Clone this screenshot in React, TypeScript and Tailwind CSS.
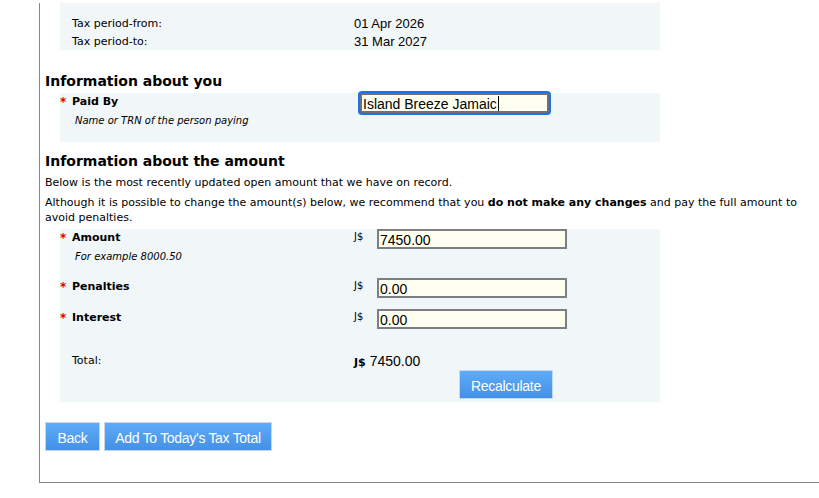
import React from 'react'

const verdana = "font-['DejaVu_Sans',Verdana,sans-serif]"
const helv = "font-['Liberation_Sans',Helvetica,Arial,sans-serif]"

function Req() {
  return <span className="w-3 shrink-0 text-[12px] font-bold text-[#e00000] leading-[14px]">*</span>
}

function MoneyInput({ value }: { value: string }) {
  return (
    <div className="flex items-start">
      <span className={`${verdana} w-[23px] text-[10px] leading-[16px] text-black`}>J$</span>
      <input
        readOnly
        value={value}
        className={`${helv} h-5 w-[190px] border-2 border-[#7d7d85] bg-[#fffff0] px-px pt-px text-[14px] leading-none text-black outline-none`}
      />
    </div>
  )
}

function Button({ label, className = '' }: { label: string; className?: string }) {
  return (
    <button
      className={`${helv} h-[29px] border border-[#c6d8ec] bg-gradient-to-b from-[#5eacf8] to-[#4490e6] pt-[3px] text-[14px] font-light leading-none tracking-[-0.3px] text-white ${className}`}
    >
      {label}
    </button>
  )
}

export default function App() {
  return (
    <div className="h-[498px] overflow-hidden bg-white">
      <div className={`${verdana} ml-[39px] border-b border-l border-[#888888] pb-[31px] pl-[5px] text-[11px] text-black`}>
        {/* tax period */}
        <div className="ml-[15px] mt-[3px] h-[47px] w-[600px] bg-[#f1f6f9] pt-[12px]">
          <div className="flex h-[18px] items-center pl-3">
            <span className="w-[282px]">Tax period-from:</span>
            <span className={`${helv} text-[13px]`}>01 Apr 2026</span>
          </div>
          <div className="flex h-[18px] items-center pl-3">
            <span className="w-[282px]">Tax period-to:</span>
            <span className={`${helv} text-[13px]`}>31 Mar 2027</span>
          </div>
        </div>

        {/* payer */}
        <h2 className="mt-[22px] h-[21px] text-[14px] font-bold leading-[18px]">Information about you</h2>
        <div className="ml-[15px] h-[49px] w-[600px] bg-[#f1f6f9]">
          <div className="flex">
            <div className="flex w-[300px] items-start pt-[2px]">
              <Req />
              <span className="text-[11px] font-bold leading-[14px]">Paid By</span>
            </div>
            <div
              className={`${helv} flex h-5 w-[189px] items-center rounded-[2px] border-2 border-[#6f6f77] bg-[#fffff0] px-px pt-px text-[14px] leading-none text-black ring-2 ring-[#1b72ec]`}
            >
              <span>Island Breeze Jamaic</span>
              <span className="ml-px h-[15px] w-px bg-black" />
            </div>
          </div>
          <p className="ml-[15px] mt-[1px] text-[10px] italic leading-[14px]">Name or TRN of the person paying</p>
        </div>

        {/* amount */}
        <h2 className="mt-[10px] h-[18px] text-[14px] font-bold leading-[18px]">Information about the amount</h2>
        <p className="mt-[5px] leading-[15px]">Below is the most recently updated open amount that we have on record.</p>
        <p className="mt-[5px] pr-4 leading-[15px]">
          Although it is possible to change the amount(s) below, we recommend that you{' '}
          <b>do not make any changes</b> and pay the full amount to avoid penalties.
        </p>

        <div className="ml-[15px] mt-[4px] h-[173px] w-[600px] bg-[#f1f6f9]">
          <div className="flex">
            <div className="flex w-[294px] items-start pt-[2px]">
              <Req />
              <span className="font-bold leading-[14px]">Amount</span>
            </div>
            <MoneyInput value="7450.00" />
          </div>
          <p className="ml-[15px] mt-[1px] text-[10px] italic leading-[14px]">For example 8000.50</p>

          <div className="mt-[14px] flex">
            <div className="flex w-[294px] items-start pt-[2px]">
              <Req />
              <span className="font-bold leading-[14px]">Penalties</span>
            </div>
            <MoneyInput value="0.00" />
          </div>

          <div className="mt-[11px] flex">
            <div className="flex w-[294px] items-start pt-[2px]">
              <Req />
              <span className="font-bold leading-[14px]">Interest</span>
            </div>
            <MoneyInput value="0.00" />
          </div>

          <div className="mt-[23px] flex h-[18px] items-center pl-3">
            <span className="w-[282px]">Total:</span>
            <span className={`${helv} text-[14px]`}>
              <b className={`${verdana} text-[11px]`}>J$</b> 7450.00
            </span>
          </div>
          <div className="pl-[399px]">
            <Button label="Recalculate" className="w-[94px]" />
          </div>
        </div>

        <div className="mt-[20px] flex gap-1">
          <Button label="Back" className="w-[55px]" />
          <Button label="Add To Today's Tax Total" className="w-[168px]" />
        </div>
      </div>
    </div>
  )
}
